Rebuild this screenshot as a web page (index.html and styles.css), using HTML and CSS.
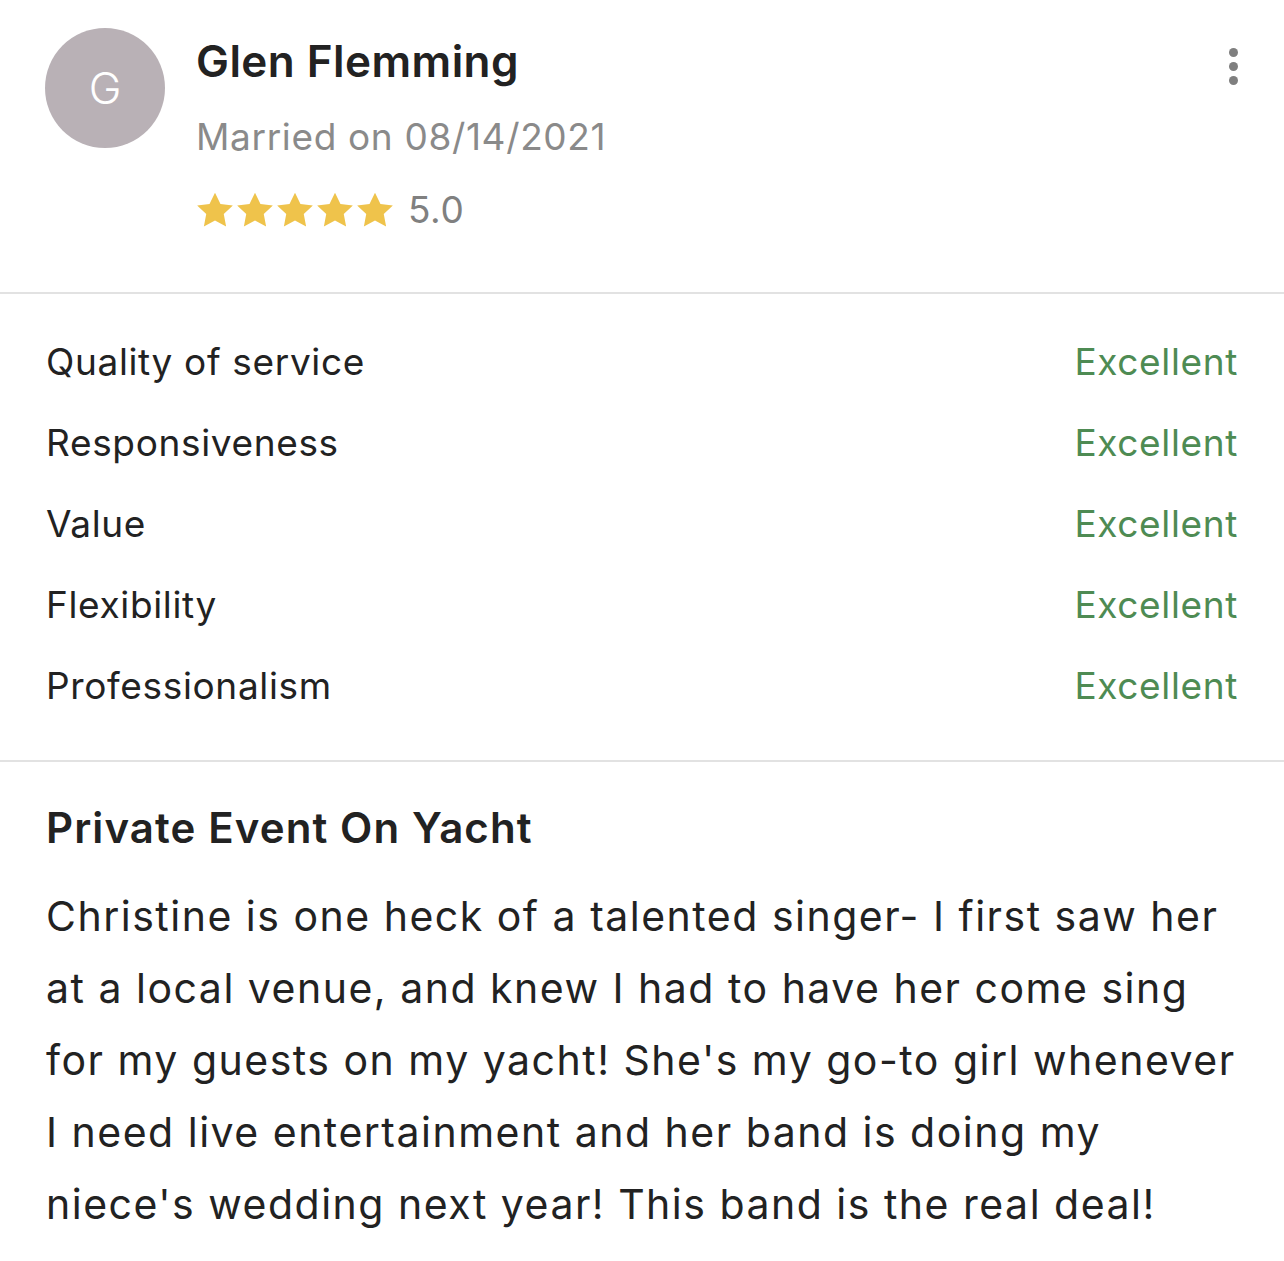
FILE: index.html
```html
<!DOCTYPE html>
<html lang="en">
<head>
<meta charset="utf-8">
<title>Review</title>
<link rel="stylesheet" href="styles.css">
</head>
<body>
<div class="review">
  <header class="head">
    <div class="avatar">G</div>
    <div class="info">
      <div class="name">Glen Flemming</div>
      <div class="married">Married on 08/14/2021</div>
      <div class="rating">
        <div class="stars">
          <svg class="star" viewBox="0 0 24 23"><path d="M12 0.4l3.5 7.2 7.9 1-5.8 5.5 1.5 7.9L12 18.2l-7.1 3.8 1.5-7.9L0.6 8.6l7.9-1z"/></svg>
          <svg class="star" viewBox="0 0 24 23"><path d="M12 0.4l3.5 7.2 7.9 1-5.8 5.5 1.5 7.9L12 18.2l-7.1 3.8 1.5-7.9L0.6 8.6l7.9-1z"/></svg>
          <svg class="star" viewBox="0 0 24 23"><path d="M12 0.4l3.5 7.2 7.9 1-5.8 5.5 1.5 7.9L12 18.2l-7.1 3.8 1.5-7.9L0.6 8.6l7.9-1z"/></svg>
          <svg class="star" viewBox="0 0 24 23"><path d="M12 0.4l3.5 7.2 7.9 1-5.8 5.5 1.5 7.9L12 18.2l-7.1 3.8 1.5-7.9L0.6 8.6l7.9-1z"/></svg>
          <svg class="star" viewBox="0 0 24 23"><path d="M12 0.4l3.5 7.2 7.9 1-5.8 5.5 1.5 7.9L12 18.2l-7.1 3.8 1.5-7.9L0.6 8.6l7.9-1z"/></svg>
        </div>
        <span class="score">5.0</span>
      </div>
    </div>
    <div class="menu" aria-label="More options">
      <span class="dot"></span><span class="dot"></span><span class="dot"></span>
    </div>
  </header>

  <section class="scores">
    <div class="row"><span class="label">Quality of service</span><span class="value">Excellent</span></div>
    <div class="row"><span class="label">Responsiveness</span><span class="value">Excellent</span></div>
    <div class="row"><span class="label">Value</span><span class="value">Excellent</span></div>
    <div class="row"><span class="label">Flexibility</span><span class="value">Excellent</span></div>
    <div class="row"><span class="label">Professionalism</span><span class="value">Excellent</span></div>
  </section>

  <section class="body">
    <h2 class="title">Private Event On Yacht</h2>
    <p class="text">Christine is one heck of a talented singer- I first saw her<br>at a local venue, and knew I had to have her come sing<br>for my guests on my yacht! She's my go-to girl whenever<br>I need live entertainment and her band is doing my<br>niece's wedding next year! This band is the real deal!</p>
  </section>
</div>
</body>
</html>
```

FILE: styles.css
```css
html, body {
  margin: 0;
  padding: 0;
  background: #ffffff;
}

body {
  font-family: "Inter", "Lato", "Liberation Sans", sans-serif;
  color: #222222;
  width: 1284px;
}

.review {
  width: 1284px;
}

.head {
  display: flex;
  align-items: flex-start;
  padding: 28px 46px 58px 45px;
  border-bottom: 2px solid #e2e2e2;
}

.avatar {
  width: 120px;
  height: 120px;
  border-radius: 50%;
  background: #b9b1b6;
  color: #ffffff;
  font-size: 44px;
  font-weight: 300;
  display: flex;
  align-items: center;
  justify-content: center;
  flex-shrink: 0;
}

.info {
  margin-left: 31px;
  margin-top: 5px;
  flex: 1;
}

.name {
  font-size: 44px;
  font-weight: 600;
  letter-spacing: 0.45px;
  line-height: 56px;
  color: #222222;
}

.married {
  margin-top: 3px;
  font-size: 37px;
  letter-spacing: 0.65px;
  line-height: 90px;
  color: #8a8a8a;
}

.rating {
  display: flex;
  align-items: center;
  height: 48px;
  margin-top: 4px;
}

.stars {
  display: flex;
  gap: 2px;
}

.star {
  width: 38px;
  height: 36px;
  fill: #efc34b;
  display: block;
}

.score {
  margin-left: 14px;
  font-size: 37px;
  letter-spacing: 0.6px;
  line-height: 48px;
  color: #808080;
}

.menu {
  display: flex;
  flex-direction: column;
  gap: 5px;
  margin-top: 20px;
}

.dot {
  width: 9px;
  height: 9px;
  border-radius: 50%;
  background: #7f7f7f;
  display: block;
}

.scores {
  padding: 27px 46px 34px 46px;
  border-bottom: 2px solid #e2e2e2;
}

.row {
  display: flex;
  justify-content: space-between;
  font-size: 37px;
  letter-spacing: 0.65px;
  line-height: 81px;
  height: 81px;
}

.label {
  color: #222222;
}

.value {
  color: #4e8b53;
}

.body {
  padding: 36px 10px 0 46px;
}

.title {
  margin: 0 0 22px 0;
  font-size: 42px;
  font-weight: 600;
  letter-spacing: 1.1px;
  line-height: 60px;
  color: #222222;
}

.text {
  margin: 0;
  font-size: 41px;
  letter-spacing: 1.5px;
  line-height: 72px;
  color: #222222;
}
```
